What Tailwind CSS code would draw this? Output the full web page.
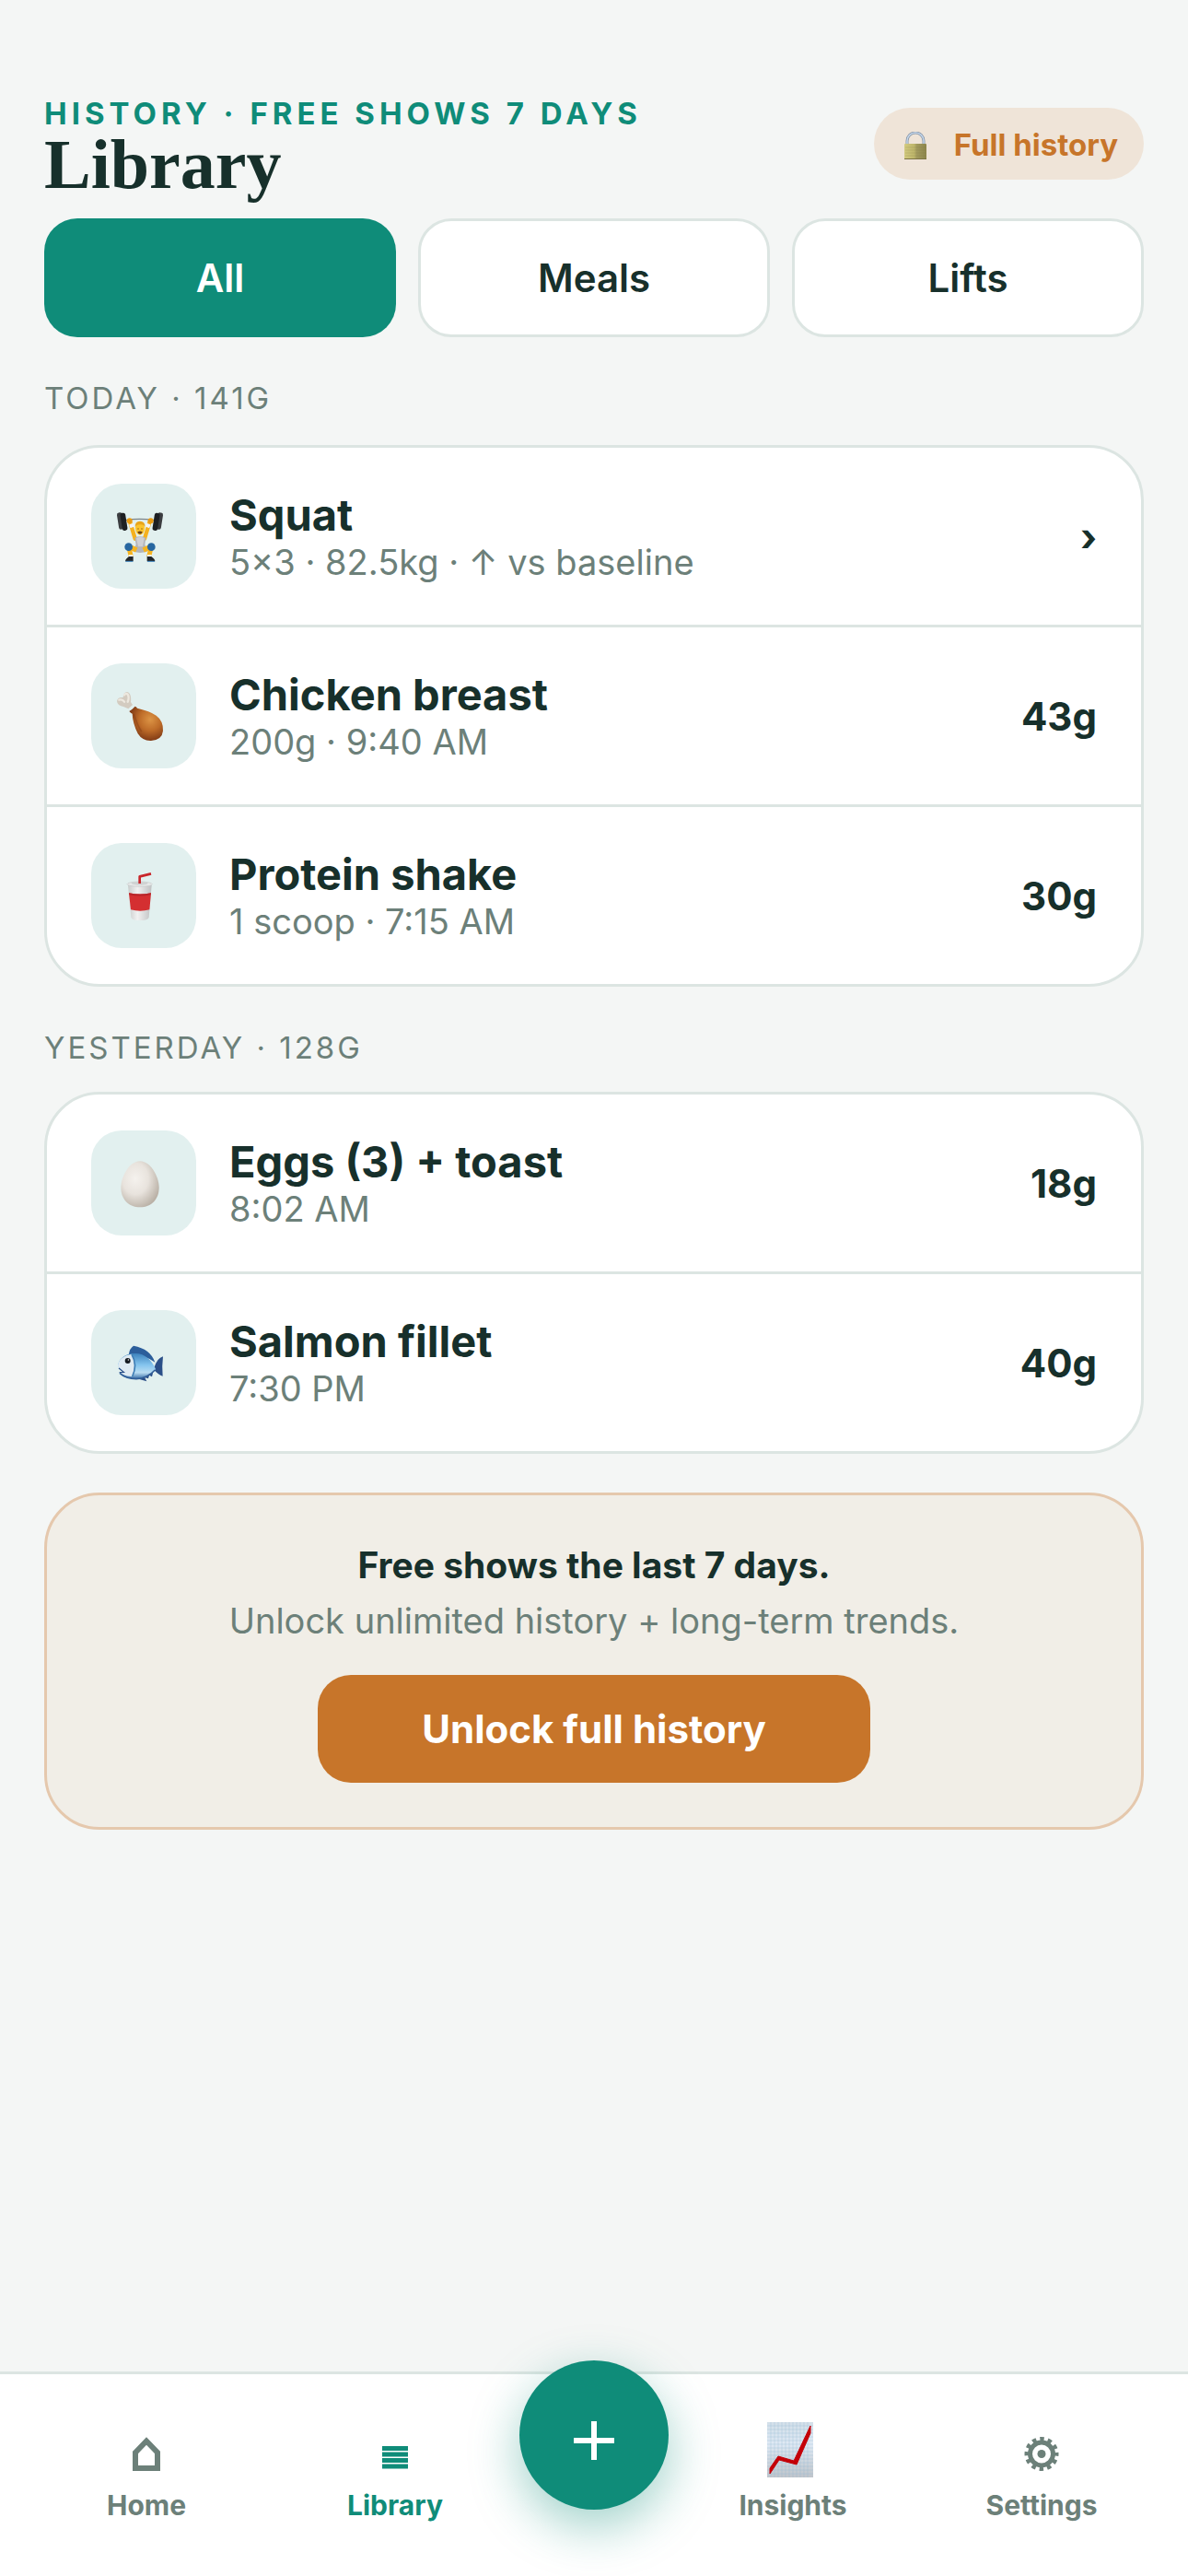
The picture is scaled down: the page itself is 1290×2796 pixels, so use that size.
<!DOCTYPE html>
<html lang="en">

<head>
    <meta charset="UTF-8">
    <meta name="viewport" content="width=device-width, initial-scale=1.0">
    <title>Library</title>
    <script src="https://cdn.jsdelivr.net/npm/@tailwindcss/browser@4"></script>
</head>

<body class="min-h-screen flex flex-col bg-[#f4f6f5] text-[#17302b] font-['Inter','Liberation_Sans',sans-serif]">
    <main class="flex-1 px-12 pt-[93px] pb-12">
        <header class="flex items-center justify-between mb-[18px]">
            <div class="pb-4">
                <p class="text-[33px] leading-[60px] font-bold tracking-[5px] text-[#0f8c79]">HISTORY · FREE SHOWS 7 DAYS</p>
                <h1 class="text-[76px] leading-[50px] font-bold font-['Liberation_Serif',serif]">Library</h1>
            </div>
            <button class="flex items-center gap-[30px] h-[78px] pt-1 pl-[33px] pr-7 rounded-full bg-[#efe4d8] text-[#c7752a] text-[33px] font-bold">
                <svg class="w-6 h-[30px]" viewBox="0 0 24 30" aria-hidden="true">
                    <defs>
                        <linearGradient id="lockBody">
                            <stop offset="0" stop-color="#d3cb80" />
                            <stop offset=".45" stop-color="#bdb56a" />
                            <stop offset=".55" stop-color="#a39b5e" />
                            <stop offset="1" stop-color="#8c854b" />
                        </linearGradient>
                    </defs>
                    <path d="M3 14V10a9 9 0 0 1 18 0v4" fill="none" stroke="#8795a5" stroke-width="3" />
                    <path d="M3 14V10a9 9 0 0 1 18 0v4" fill="none" stroke="#c3d5ea" stroke-width="1.5" />
                    <rect y="13" width="24" height="17" rx="1" fill="url(#lockBody)" />
                    <path d="M1 17h22M1 20h22M1 23h22M1 26h22" stroke="#777040" stroke-opacity=".2" />
                    <path d="M0 29.500h24" stroke="#7c7345" />
                </svg>
                Full history
            </button>
        </header>

        <div class="grid grid-cols-3 gap-6 text-[42px] leading-[51px] font-semibold">
            <button class="h-[129px] rounded-[36px] bg-[#0f8c79] text-white">All</button>
            <button class="h-[129px] rounded-[36px] border-3 border-[#dce5e2] bg-white">Meals</button>
            <button class="h-[129px] rounded-[36px] border-3 border-[#dce5e2] bg-white">Lifts</button>
        </div>

        <h2 class="mt-[42px] mb-[27px] text-[33px] leading-[48px] tracking-[3px] text-[#6c8079]">TODAY · 141G</h2>
        <ul class="rounded-[60px] border-3 border-[#dce5e2] bg-white divide-y-3 divide-[#dce5e2]">
            <li class="flex items-center gap-9 px-12 py-[39px]">
                <svg class="size-[114px] rounded-[33px] bg-[#e2f0ef]" viewBox="0 0 342 342" aria-hidden="true">
                    <path d="M112 119q44-8 92 0" fill="none" stroke="#7b8286" stroke-width="4" />
                    <rect x="87" y="94" width="17" height="55" rx="7" fill="#3b3d40" transform="rotate(-9 95 121)" />
                    <rect x="98" y="95" width="17" height="58" rx="7" fill="#1d1f22" transform="rotate(-9 106 124)" />
                    <rect x="214" y="94" width="17" height="55" rx="7" fill="#3b3d40" transform="rotate(9 222 121)" />
                    <rect x="203" y="95" width="17" height="58" rx="7" fill="#1d1f22" transform="rotate(9 211 124)" />
                    <path d="M126 123l17 56M191 123l-17 56" stroke="#f5b11e" stroke-width="13" stroke-linecap="round" />
                    <path d="M130 131l4 11M187 131l-4 11" stroke="#f4f4f4" stroke-width="14" />
                    <circle cx="125" cy="121" r="9" fill="#e99a12" />
                    <circle cx="194" cy="121" r="9" fill="#e99a12" />
                    <path d="M142 176q17-8 36 0l-3 22 9 22q-25 10-47 0l9-22z" fill="#b4b5ba" />
                    <path d="M147 177q13-6 26 0l-5 28h-15z" fill="#d0d0d4" />
                    <ellipse cx="159" cy="145" rx="15" ry="22" fill="#fbc52c" />
                    <path d="M143 140q0-18 16-18t17 18q-6-8-17-7-10 0-16 7z" fill="#e8a51c" />
                    <path d="M151 147h4M163 147h4" stroke="#7b4a12" stroke-width="3" />
                    <path d="M151 157q8-5 16 0-1 7-8 7t-8-7z" fill="#704214" />
                    <path d="M123 208l7 30M195 208l-7 30" stroke="#f6b420" stroke-width="15" />
                    <path d="M130 208l18 8M188 208l-18 8" stroke="#f6b420" stroke-width="17" />
                    <circle cx="122" cy="206" r="13" fill="#2766a0" />
                    <circle cx="196" cy="206" r="13" fill="#2766a0" />
                    <path d="M122 232h14v8h-14zM183 232h14v8h-14z" fill="#fff" />
                    <path d="M123 237h14v16h-26q0-7 12-16zM182 237h14q12 9 12 16h-26z" fill="#22262b" />
                    <path d="M112 253h24M183 253h24" stroke="#4089c4" stroke-width="3" />
                </svg>
                <div class="flex-1 pt-[2px]">
                    <h3 class="text-[47px] leading-[54px] font-bold">Squat</h3>
                    <p class="text-[38px] leading-[48px] text-[#6c8079]">5×3 · 82.5kg · ↑ vs baseline</p>
                </div>
                <span class="text-[42px] font-bold">›</span>
            </li>
            <li class="flex items-center gap-9 px-12 py-[39px]">
                <svg class="size-[114px] rounded-[33px] bg-[#e2f0ef]" viewBox="0 0 342 342" aria-hidden="true">
                    <defs>
                        <radialGradient id="drumstick" cx=".62" cy=".38" r=".65">
                            <stop offset="0" stop-color="#dc9445" />
                            <stop offset=".5" stop-color="#bd6b28" />
                            <stop offset="1" stop-color="#7b3613" />
                        </radialGradient>
                    </defs>
                    <path d="M121 148l14-13-6-9q3-30-12-33-12 1-13 18-18-2-20 12 1 14 21 18z" fill="#d3cbc0" />
                    <path d="M108 103q5-8 11-2 6 10 0 24M91 119q11-3 17 6" fill="none" stroke="#ede8df" stroke-width="7" stroke-linecap="round" />
                    <path d="M124 156q10-6 19-16 5 1 7 6 41 9 62 24 24 18 22 50-3 30-39 32-28 1-43-23-17-35-18-65-5-2-10-8z" fill="url(#drumstick)" />
                    <path d="M139 165q12 38 25 57" fill="none" stroke="#7c3511" stroke-opacity=".35" stroke-width="5" />
                </svg>
                <div class="flex-1 pt-[2px]">
                    <h3 class="text-[47px] leading-[54px] font-bold">Chicken breast</h3>
                    <p class="text-[38px] leading-[48px] text-[#6c8079]">200g · 9:40 AM</p>
                </div>
                <span class="text-[42px] font-bold">43g</span>
            </li>
            <li class="flex items-center gap-9 px-12 py-[39px]">
                <svg class="size-[114px] rounded-[33px] bg-[#e2f0ef]" viewBox="0 0 342 342" aria-hidden="true">
                    <defs>
                        <linearGradient id="cup">
                            <stop offset="0" stop-color="#c9cccc" />
                            <stop offset=".4" stop-color="#f1f1f1" />
                            <stop offset="1" stop-color="#bfc1c2" />
                        </linearGradient>
                    </defs>
                    <path d="M120 138l10 104q3 10 29 10t29-10l9-104z" fill="url(#cup)" />
                    <path d="M123 163q36 7 72 0l-5 54q-30 8-61 0z" fill="#d42f31" />
                    <path d="M123 163q36 7 72 0l-1 6q-35 7-70 0z" fill="#b82529" />
                    <ellipse cx="158" cy="134" rx="41" ry="8" fill="#e7e8e8" stroke="#c4c8c8" stroke-width="2" />
                    <ellipse cx="158" cy="131" rx="27" ry="6" fill="#cfd2d2" />
                    <path d="M158 132v-23l37-9" fill="none" stroke="#c9262b" stroke-width="8" stroke-linejoin="round" />
                </svg>
                <div class="flex-1 pt-[2px]">
                    <h3 class="text-[47px] leading-[54px] font-bold">Protein shake</h3>
                    <p class="text-[38px] leading-[48px] text-[#6c8079]">1 scoop · 7:15 AM</p>
                </div>
                <span class="text-[42px] font-bold">30g</span>
            </li>
        </ul>

        <h2 class="mt-[42px] mb-6 text-[33px] leading-[48px] tracking-[3px] text-[#6c8079]">YESTERDAY · 128G</h2>
        <ul class="rounded-[60px] border-3 border-[#dce5e2] bg-white divide-y-3 divide-[#dce5e2]">
            <li class="flex items-center gap-9 px-12 py-[39px]">
                <svg class="size-[114px] rounded-[33px] bg-[#e2f0ef]" viewBox="0 0 342 342" aria-hidden="true">
                    <defs>
                        <radialGradient id="egg" cx=".38" cy=".38" r=".68">
                            <stop offset="0" stop-color="#f5f2ee" />
                            <stop offset=".5" stop-color="#e8e3dd" />
                            <stop offset="1" stop-color="#b9b0a5" />
                        </radialGradient>
                    </defs>
                    <path d="M159 100c34 0 62 50 62 86 0 38-25 64-62 64s-62-26-62-64c0-36 28-86 62-86z" fill="url(#egg)" />
                </svg>
                <div class="flex-1 pt-[2px]">
                    <h3 class="text-[47px] leading-[54px] font-bold">Eggs (3) + toast</h3>
                    <p class="text-[38px] leading-[48px] text-[#6c8079]">8:02 AM</p>
                </div>
                <span class="text-[42px] font-bold">18g</span>
            </li>
            <li class="flex items-center gap-9 px-12 py-[39px]">
                <svg class="size-[114px] rounded-[33px] bg-[#e2f0ef]" viewBox="0 0 342 342" aria-hidden="true">
                    <defs>
                        <linearGradient id="fish" x2="0" y2="1">
                            <stop offset="0" stop-color="#3c82bd" />
                            <stop offset=".45" stop-color="#84c4ee" />
                            <stop offset=".75" stop-color="#b8dcf2" />
                            <stop offset="1" stop-color="#356ba5" />
                        </linearGradient>
                    </defs>
                    <path d="M122 146q3-22 16-30 55 10 70 54-30-25-86-24z" fill="#2c5e9b" />
                    <path d="M205 188q10-32 29-37-4 32-1 64-14-4-28-20z" fill="#2b4f88" />
                    <path d="M155 217q24-4 47-15l-4 15-9-5-3 11-12-4 7 13-24-7z" fill="#2b4f88" />
                    <path d="M87 184c0-27 27-44 57-43 32 0 54 23 66 51-13 19-38 33-63 32-30-1-51-9-55-21l12-1z" fill="url(#fish)" />
                    <path d="M87 184c1-23 18-37 46-41 12 21 15 46 1 73-22-1-36-6-41-12l13-2z" fill="#dfeaf2" />
                    <path d="M132 144q20 34 2 72" fill="none" stroke="#3d7db5" stroke-width="5" />
                    <path d="M92 203l14-1-16-13" fill="none" stroke="#2b4f88" stroke-width="4" />
                    <path d="M93 205q20 18 54 19 35-1 61-29" fill="none" stroke="#315e98" stroke-width="5" />
                    <circle cx="119" cy="165" r="9" fill="#161a20" />
                    <circle cx="121" cy="162" r="2" fill="#fff" />
                </svg>
                <div class="flex-1 pt-[2px]">
                    <h3 class="text-[47px] leading-[54px] font-bold">Salmon fillet</h3>
                    <p class="text-[38px] leading-[48px] text-[#6c8079]">7:30 PM</p>
                </div>
                <span class="text-[42px] font-bold">40g</span>
            </li>
        </ul>

        <section class="mt-[42px] flex flex-col items-center rounded-[60px] border-3 border-[#e5c8ad] bg-[#f1eee7] pt-[46px] pb-12 text-[39px] leading-[60px]">
            <p class="font-bold">Free shows the last 7 days.</p>
            <p class="text-[38px] text-[#6c8079]">Unlock unlimited history + long-term trends.</p>
            <button class="mt-[29px] h-[117px] w-[600px] rounded-[36px] bg-[#c7752a] text-white text-[42px] font-bold">Unlock full history</button>
        </section>
    </main>

    <nav class="flex h-[222px] px-6 border-t-3 border-[#dce5e2] bg-white text-[30px] leading-9 font-bold text-[#6c8079]">
        <a href="#home" class="flex-1 flex flex-col items-center pt-[51px]">
            <svg class="size-[66px]" viewBox="0 0 66 66" aria-hidden="true">
                <path d="M21 34L33 21.500 45 34V51H21z" fill="none" stroke="currentColor" stroke-width="6" />
            </svg>
            <span class="mt-[7px]">Home</span>
        </a>
        <a href="#library" class="flex-1 flex flex-col items-center pt-[51px] text-[#0f8c79]">
            <svg class="size-[66px]" viewBox="0 0 66 66" aria-hidden="true">
                <path d="M19 29.500h28M19 36h28M19 42.500h28M19 49h28" stroke="currentColor" stroke-width="5" />
            </svg>
            <span class="mt-[7px]">Library</span>
        </a>
        <button aria-label="Add" class="-mt-[15px] size-[162px] rounded-full bg-[#0f8c79] text-white shadow-[0_18px_54px_rgba(15,140,121,0.4)] flex items-center justify-center">
            <svg class="size-[162px]" viewBox="0 0 162 162" aria-hidden="true">
                <path d="M59 87h44M81 66v42" stroke="currentColor" stroke-width="6" />
            </svg>
        </button>
        <a href="#insights" class="flex-1 flex flex-col items-center pt-[51px]">
            <svg class="size-[66px]" viewBox="0 0 66 66" aria-hidden="true">
                <defs>
                    <linearGradient id="chart" x2="0" y2="1">
                        <stop offset="0" stop-color="#d3dfe9" />
                        <stop offset=".4" stop-color="#dfe9f4" />
                        <stop offset="1" stop-color="#bfc5cb" />
                    </linearGradient>
                </defs>
                <path d="M5 1h50v60H5z" fill="url(#chart)" />
                <path d="M9 1v60M13 1v60M17 1v60M21 1v60M25 1v60M29 1v60M33 1v60M37 1v60M41 1v60M45 1v60M49 1v60M5 5h50M5 9h50M5 13h50M5 17h50M5 21h50M5 25h50M5 29h50M5 33h50M5 37h50M5 41h50M5 45h50M5 49h50M5 53h50M5 57h50" stroke="#8fb3d1" stroke-opacity=".3" />
                <path d="M8 57V51L17 38 34 43 52 5V13L37 47 18 42z" fill="#c40008" stroke="#c40008" />
            </svg>
            <span class="mt-[7px]">Insights</span>
        </a>
        <a href="#settings" class="flex-1 flex flex-col items-center pt-[51px]">
            <svg class="size-[66px]" viewBox="0 0 66 66" aria-hidden="true">
                <circle cx="33" cy="35.500" r="12.500" fill="none" stroke="currentColor" stroke-width="5" />
                <circle cx="33" cy="35.500" r="16" fill="none" stroke="currentColor" stroke-width="5" stroke-dasharray="4.400 3.978" stroke-dashoffset="2.200" />
                <circle cx="33" cy="35.500" r="4.500" fill="currentColor" />
            </svg>
            <span class="mt-[7px]">Settings</span>
        </a>
    </nav>
</body>

</html>
